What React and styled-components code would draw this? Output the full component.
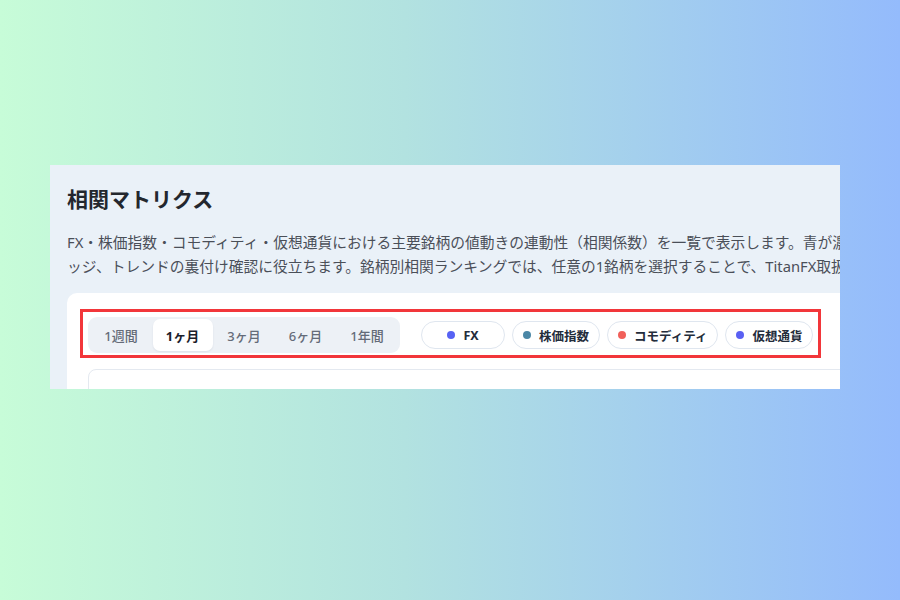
import React, { useState } from 'react';
import styled, { createGlobalStyle } from 'styled-components';

const GlobalStyle = createGlobalStyle`
  html, body {
    margin: 0;
    padding: 0;
  }
  body {
    font-family: "Noto Sans", "Noto Sans CJK JP", sans-serif;
  }
`;

const periods = ['1週間', '1ヶ月', '3ヶ月', '6ヶ月', '1年間'];

const categories = [
  { label: 'FX', color: '#5762f4' },
  { label: '株価指数', color: '#4b87a6' },
  { label: 'コモディティ', color: '#f1605a' },
  { label: '仮想通貨', color: '#5a60f3' },
];

const Stage = styled.div`
  width: 900px;
  height: 600px;
  box-sizing: border-box;
  padding: 165px 0 0 50px;
  background: linear-gradient(to right, #c7fcd8, #b2e2e0 45%, #94bbfc);
  overflow: hidden;
`;

const Shot = styled.div`
  width: 790px;
  height: 224px;
  overflow: hidden;
  background: #eaf1f8;
`;

const Page = styled.div`
  width: 1100px;
  box-sizing: border-box;
  padding: 19px 0 0 17px;
`;

const Title = styled.h2`
  margin: 0;
  font-family: "Noto Sans CJK JP", sans-serif;
  font-size: 21px;
  line-height: 29px;
  font-weight: 700;
  color: #23272e;
`;

const Lead = styled.p`
  margin: 17px 0 0;
  font-family: "Noto Sans", "Noto Sans CJK JP", sans-serif;
  font-size: 14.75px;
  line-height: 24px;
  color: #4a4f58;
`;

const Line = styled.span`
  display: block;
  white-space: nowrap;
`;

const Card = styled.section`
  margin-top: 15px;
  background: #ffffff;
  border-radius: 10px 0 0 0;
  padding: 24px 0 0 21px;
  height: 200px;
`;

const Toolbar = styled.div`
  position: relative;
  display: inline-flex;
  align-items: center;
  gap: 21px;

  &::after {
    content: '';
    position: absolute;
    top: -8px;
    left: -8px;
    right: -8px;
    bottom: -5px;
    border: 3px solid #f2363a;
    pointer-events: none;
  }
`;

const Segmented = styled.div`
  display: flex;
  gap: 1.5px;
  padding: 2px 3px;
  background: #edf1f6;
  border-radius: 9px;
`;

const Segment = styled.button`
  width: 60px;
  height: 32px;
  border: none;
  border-radius: 7px;
  font-family: "Noto Sans", "Noto Sans CJK JP", sans-serif;
  font-size: 13px;
  font-weight: ${(p) => (p.$active ? 700 : 500)};
  color: ${(p) => (p.$active ? '#1b202b' : '#646b78')};
  background: ${(p) => (p.$active ? '#ffffff' : 'transparent')};
  box-shadow: ${(p) => (p.$active ? '0 1px 2px rgba(30, 40, 60, 0.08)' : 'none')};
  cursor: pointer;
  padding: 0;
`;

const Chips = styled.div`
  display: flex;
  gap: 7px;
`;

const Chip = styled.button`
  display: inline-flex;
  align-items: center;
  justify-content: center;
  gap: 8px;
  min-width: 84px;
  height: 28px;
  box-sizing: border-box;
  padding: 0 10px;
  border: 1.5px solid #dfe6ef;
  border-radius: 14px;
  background: #ffffff;
  font-family: "Noto Sans", "Noto Sans CJK JP", sans-serif;
  font-size: 12.5px;
  font-weight: 700;
  color: #232c3b;
  cursor: pointer;
`;

const Dot = styled.span`
  width: 8px;
  height: 8px;
  border-radius: 50%;
  background: ${(p) => p.$color};
`;

const Matrix = styled.div`
  margin-top: 16px;
  height: 160px;
  border: 1px solid #e4e9f0;
  border-radius: 8px;
`;

export default function App() {
  const [period, setPeriod] = useState('1ヶ月');

  return (
    <>
      <GlobalStyle />
      <Stage>
        <Shot>
          <Page>
            <Title>相関マトリクス</Title>
            <Lead>
              <Line>
                FX・株価指数・コモディティ・仮想通貨における主要銘柄の値動きの連動性（相関係数）を一覧で表示します。青が濃いほど正の相関、赤が濃いほど負の相関を表し、分散投資やヘ
              </Line>
              <Line>
                ッジ、トレンドの裏付け確認に役立ちます。銘柄別相関ランキングでは、任意の1銘柄を選択することで、TitanFX取扱銘柄との相関を確認できます。
              </Line>
            </Lead>
            <Card>
              <Toolbar>
                <Segmented>
                  {periods.map((p) => (
                    <Segment key={p} $active={p === period} onClick={() => setPeriod(p)}>
                      {p}
                    </Segment>
                  ))}
                </Segmented>
                <Chips>
                  {categories.map((c) => (
                    <Chip key={c.label}>
                      <Dot $color={c.color} />
                      {c.label}
                    </Chip>
                  ))}
                </Chips>
              </Toolbar>
              <Matrix />
            </Card>
          </Page>
        </Shot>
      </Stage>
    </>
  );
}
